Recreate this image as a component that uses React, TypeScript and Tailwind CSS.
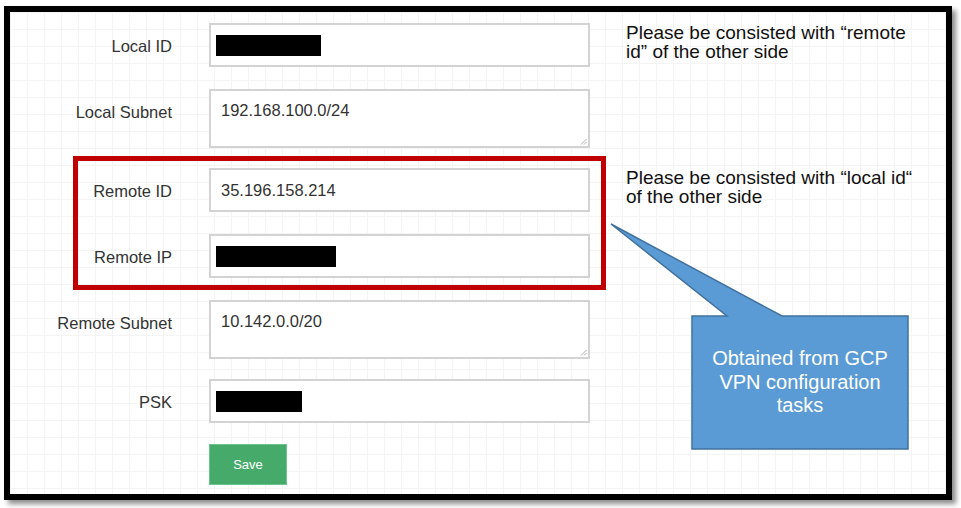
import React from "react";

const font = { fontFamily: '"Liberation Sans", Arial, sans-serif' };

function Grip() {
  return (
    <svg className="absolute right-[1px] bottom-[1px]" width="7" height="7" viewBox="0 0 7 7">
      <line x1="6.5" y1="1" x2="1" y2="6.5" stroke="#9a9a9a" strokeWidth="0.8" />
      <line x1="6.5" y1="4" x2="4" y2="6.5" stroke="#9a9a9a" strokeWidth="0.8" />
    </svg>
  );
}

function Field({ value, redact, area }: { value?: string; redact?: number; area?: boolean }) {
  return (
    <div
      className={
        "relative w-[381px] bg-white border-2 border-[#d3d3d3] text-[16.5px] text-[#333] px-[10px] " +
        (area ? "h-[59px] pt-[10px] leading-[19px]" : "h-[44px] flex items-center")
      }
    >
      {redact ? (
        <span className="block h-[21px] bg-black -ml-[5px]" style={{ width: redact }} />
      ) : (
        <span>{value}</span>
      )}
      {area && <Grip />}
    </div>
  );
}

function Row({
  label,
  labelW,
  children,
  className = "",
}: {
  label: string;
  labelW: number;
  children: React.ReactNode;
  className?: string;
}) {
  return (
    <div className={"flex items-start " + className}>
      <div
        className="h-[44px] pt-[2px] flex items-center justify-end text-[16.5px] text-[#333] shrink-0"
        style={{ width: labelW }}
      >
        {label}
      </div>
      <div className="ml-[37px]">{children}</div>
    </div>
  );
}

export default function App() {
  return (
    <div className="w-[961px] h-[508px] bg-white pt-[6px] pl-[4px] overflow-hidden" style={font}>
      <div className="relative box-border w-[948px] h-[494px] border-[6px] border-black shadow-[4px_4px_5px_rgba(0,0,0,0.45)] bg-white bg-[linear-gradient(to_right,#f4f4f4_1px,transparent_1px),linear-gradient(to_bottom,#f4f4f4_1px,transparent_1px)] bg-[size:17px_17px] flex">
        <div className="pt-[11px] w-[580px] shrink-0">
          <Row label="Local ID" labelW={162}>
            <Field redact={105} />
          </Row>
          <Row label="Local Subnet" labelW={162} className="mt-[22px]">
            <Field value="192.168.100.0/24" area />
          </Row>
          <div className="mt-[8px] ml-[63px] w-[533px] border-[5px] border-[#c00000] py-[7px]">
            <Row label="Remote ID" labelW={94}>
              <Field value="35.196.158.214" />
            </Row>
            <Row label="Remote IP" labelW={94} className="mt-[22px]">
              <Field redact={120} />
            </Row>
          </div>
          <Row label="Remote Subnet" labelW={162} className="mt-[10px]">
            <Field value="10.142.0.0/20" area />
          </Row>
          <Row label="PSK" labelW={162} className="mt-[20px]">
            <Field redact={86} />
          </Row>
          <div className="mt-[21px] ml-[199px]">
            <button className="w-[78px] h-[41px] bg-[#46ab6a] border border-[#6cc38c] text-white text-[13px]">
              Save
            </button>
          </div>
        </div>
        <div className="ml-[36px] w-[295px] text-[19px] leading-[19px] text-[#111]">
          <p className="mt-[11px]">Please be consisted with “remote id” of the other side</p>
          <p className="mt-[107px]">Please be consisted with “local id“ of the other side</p>
        </div>

        <svg
          className="absolute left-[595px] top-[208px] pointer-events-none"
          width="310"
          height="235"
          viewBox="0 0 310 235"
        >
          <path
            d="M6 4 L177 96 L303 96 L303 229 L87 229 L87 96 L122 96 Z"
            fill="#5b9bd5"
            stroke="#41719c"
            strokeWidth="1.5"
            strokeLinejoin="miter"
          />
        </svg>
        <div className="absolute left-[682px] top-[304px] w-[216px] h-[133px] flex items-center justify-center text-center text-white text-[20px] leading-[23.5px] px-[6px]">
          Obtained from GCP VPN configuration tasks
        </div>
      </div>
    </div>
  );
}
